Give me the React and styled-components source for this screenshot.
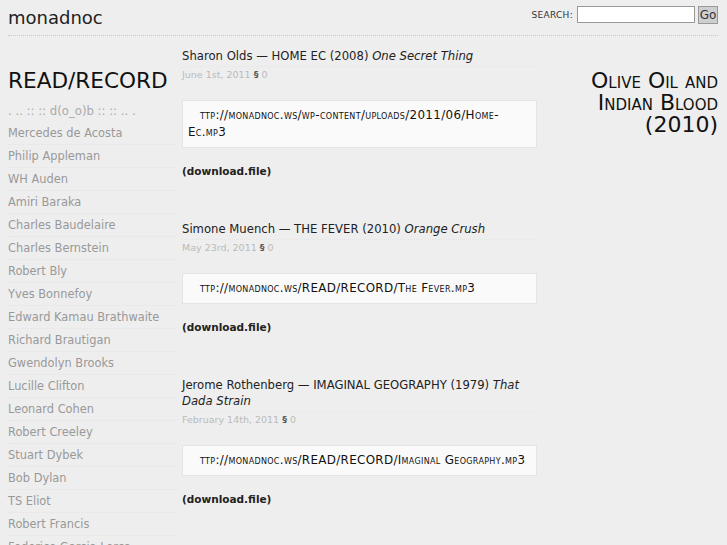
import React from "react";
import styled, { createGlobalStyle } from "styled-components";

const Global = createGlobalStyle`
  html, body { margin: 0; padding: 0; background: #eeeeee; }
  body { font-family: "DejaVu Sans", Verdana, sans-serif; color: #222; }
`;

const Page = styled.div`
  padding: 0 9px 0 8px;
`;

const Header = styled.header`
  display: flex;
  align-items: center;
  justify-content: space-between;
  height: 35px;
  border-bottom: 1px dotted #c8c8c8;
`;

const SiteTitle = styled.div`
  font-size: 18px;
  color: #222;
`;

const SearchForm = styled.form`
  display: flex;
  align-items: center;
  gap: 3px;
  margin-top: -6px;
`;

const SearchLabel = styled.label`
  font-size: 9px;
  letter-spacing: 0.3px;
  color: #333;
  margin-right: 1px;
`;

const SearchInput = styled.input`
  box-sizing: border-box;
  width: 118px;
  height: 17px;
  border: 1px solid #999;
  padding: 1px 2px;
  background: #fff;
  font-size: 11px;
`;

const GoButton = styled.button`
  box-sizing: border-box;
  height: 18px;
  width: 20px;
  padding: 0;
  border: 1px solid #999;
  background: #cfcfcf;
  font-family: "DejaVu Sans", sans-serif;
  font-size: 12px;
  color: #333;
`;

const Columns = styled.div`
  display: grid;
  grid-template-columns: 174px 355px 1fr;
`;

const Sidebar = styled.aside`
  padding-top: 31px;
`;

const BigTitle = styled.h1`
  margin: 0;
  font-weight: normal;
  font-size: 21.6px;
  line-height: 28px;
  color: #111;
`;

const Tagline = styled.div`
  font-size: 11.7px;
  color: #aaa;
  margin-top: 8px;
  line-height: 16px;
`;

const AuthorList = styled.ul`
  list-style: none;
  margin: 3px 0 0;
  padding: 0;
`;

const Author = styled.li`
  font-size: 11.4px;
  line-height: 22px;
  color: #999;
  border-bottom: 1px dotted #e5e5e5;
  width: 168px;
`;

const Main = styled.main`
  padding-top: 12px;
`;

const Post = styled.article`
  margin-bottom: 44px;
`;

const PostTitle = styled.h2`
  margin: 0;
  font-weight: normal;
  font-size: 11.65px;
  line-height: 16px;
  color: #222;
  padding-bottom: 2px;
  border-bottom: 1px dotted #e6e6e6;
`;

const Meta = styled.div`
  font-size: 9.5px;
  color: #bbb;
  margin-top: 1px;
  line-height: 14px;
  b { color: #555; }
`;

const EmbedBox = styled.div`
  margin-top: 18px;
  background: #fafafa;
  border: 1px solid #e4e4e4;
  padding: 6px 4px 6px 5px;
  font-size: 11.9px;
  letter-spacing: 0.33px;
  line-height: 17px;
  font-variant: small-caps;
  color: #111;
  text-indent: 12px;
`;

const Download = styled.div`
  margin-top: 17px;
  font-size: 10.5px;
  font-weight: bold;
  color: #222;
`;

const Aside = styled.aside`
  padding-top: 34px;
  text-align: right;
`;

const Feature = styled.div`
  font-size: 22px;
  line-height: 22px;
  font-variant: small-caps;
  color: #111;
`;

const authors = [
  "Mercedes de Acosta",
  "Philip Appleman",
  "WH Auden",
  "Amiri Baraka",
  "Charles Baudelaire",
  "Charles Bernstein",
  "Robert Bly",
  "Yves Bonnefoy",
  "Edward Kamau Brathwaite",
  "Richard Brautigan",
  "Gwendolyn Brooks",
  "Lucille Clifton",
  "Leonard Cohen",
  "Robert Creeley",
  "Stuart Dybek",
  "Bob Dylan",
  "TS Eliot",
  "Robert Francis",
  "Federico Garcia Lorca",
];

const posts = [
  {
    title: "Sharon Olds — HOME EC (2008) ",
    em: "One Secret Thing",
    date: "June 1st, 2011",
    url: "ttp://monadnoc.ws/wp-content/uploads/2011/06/Home-Ec.mp3",
  },
  {
    title: "Simone Muench — THE FEVER (2010) ",
    em: "Orange Crush",
    date: "May 23rd, 2011",
    url: "ttp://monadnoc.ws/READ/RECORD/The Fever.mp3",
  },
  {
    title: "Jerome Rothenberg — IMAGINAL GEOGRAPHY (1979) ",
    em: "That Dada Strain",
    date: "February 14th, 2011",
    url: "ttp://monadnoc.ws/READ/RECORD/Imaginal Geography.mp3",
  },
];

export default function App() {
  return (
    <Page>
      <Global />
      <Header>
        <SiteTitle>monadnoc</SiteTitle>
        <SearchForm onSubmit={(e) => e.preventDefault()}>
          <SearchLabel>SEARCH:</SearchLabel>
          <SearchInput type="text" />
          <GoButton type="submit">Go</GoButton>
        </SearchForm>
      </Header>
      <Columns>
        <Sidebar>
          <BigTitle>READ/RECORD</BigTitle>
          <Tagline>. .. :: :: d(o_o)b :: :: .. .</Tagline>
          <AuthorList>
            {authors.map((a) => (
              <Author key={a}>{a}</Author>
            ))}
          </AuthorList>
        </Sidebar>
        <Main>
          {posts.map((p) => (
            <Post key={p.date}>
              <PostTitle>
                {p.title}
                <em>{p.em}</em>
              </PostTitle>
              <Meta>
                {p.date} <b>§</b> 0
              </Meta>
              <EmbedBox>{p.url}</EmbedBox>
              <Download>(download.file)</Download>
            </Post>
          ))}
        </Main>
        <Aside>
          <Feature>
            Olive Oil and
            <br />
            Indian Blood
            <br />
            (2010)
          </Feature>
        </Aside>
      </Columns>
    </Page>
  );
}
